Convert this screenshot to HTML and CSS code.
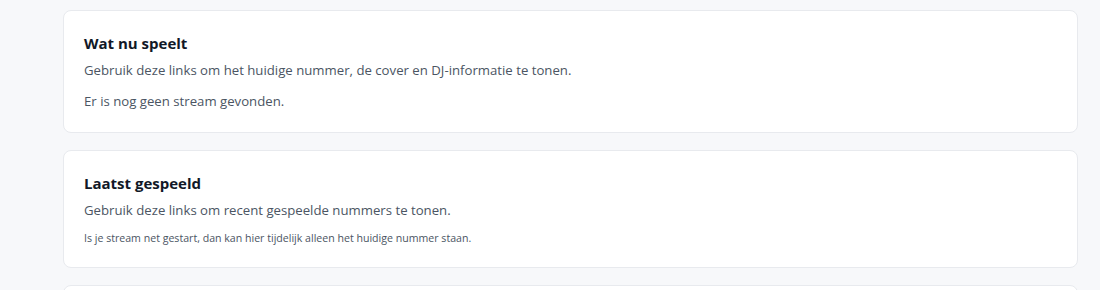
FILE: index.html
```html
<!DOCTYPE html>
<html lang="nl">
<head>
    <meta charset="UTF-8">
    <meta name="viewport" content="width=device-width, initial-scale=1.0">
    <title>Stream widgets</title>
    <link rel="stylesheet" href="styles.css">
</head>
<body>
    <main class="widget-list">
        <section class="widget-card">
            <h3>Wat nu speelt</h3>
            <p>Gebruik deze links om het huidige nummer, de cover en DJ-informatie te tonen.</p>
            <p>Er is nog geen stream gevonden.</p>
        </section>

        <section class="widget-card">
            <h3>Laatst gespeeld</h3>
            <p>Gebruik deze links om recent gespeelde nummers te tonen.</p>
            <p class="hint">Is je stream net gestart, dan kan hier tijdelijk alleen het huidige nummer staan.</p>
        </section>

        <section class="widget-card"></section>
    </main>
</body>
</html>
```

FILE: styles.css
```css
* {
    margin: 0;
    padding: 0;
    box-sizing: border-box;
}

body {
    font-family: 'Open Sans', 'Noto Sans', sans-serif;
    background: #f7f8fa;
    color: #111827;
    overflow: hidden;
}

.widget-list {
    display: flex;
    flex-direction: column;
    gap: 17px;
    margin: 10px 22px 0 63px;
}

.widget-card {
    background: #fff;
    border: 1px solid #e8eaee;
    border-radius: 8px;
    padding: 22px 20px 21px;
    min-height: 100px;
}

.widget-card h3 {
    font-size: 15px;
    font-weight: 700;
    line-height: 20px;
    margin-bottom: 7px;
    color: #111827;
}

.widget-card p {
    font-size: 13.2px;
    line-height: 20px;
    color: #4b5563;
    margin-bottom: 11px;
}

.widget-card p:last-child {
    margin-bottom: 0;
}

.widget-card .hint {
    font-size: 10.6px;
    line-height: 15px;
}
```
